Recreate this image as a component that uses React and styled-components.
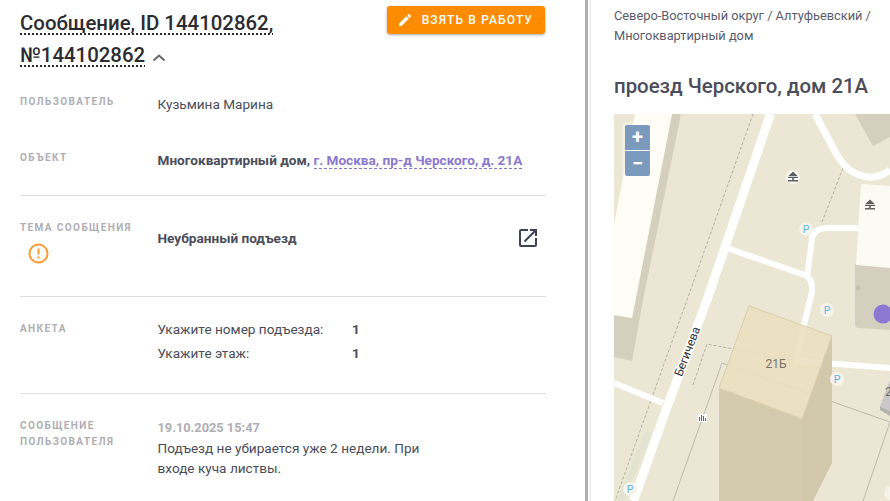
import React from 'react';
import styled, { createGlobalStyle } from 'styled-components';

const GlobalStyle = createGlobalStyle`
  html, body {
    margin: 0;
    padding: 0;
    height: 100%;
    overflow: hidden;
    background: #fff;
    font-family: Roboto, "Liberation Sans", sans-serif;
  }
`;

const Page = styled.div`
  display: flex;
  width: 890px;
  height: 501px;
  overflow: hidden;
`;

const Left = styled.section`
  box-sizing: border-box;
  width: 588px;
  flex: none;
  height: 501px;
  overflow: hidden;
  padding: 0 39px 0 20px;
  border-right: 3px solid #aeaeb4;
`;

const Head = styled.header`
  display: flex;
  justify-content: space-between;
  align-items: flex-start;
  padding-top: 6px;
  height: 74px;
  box-sizing: border-box;
`;

const Title = styled.h1`
  width: 340px;
  margin: 0;
  padding-top: 1px;
  font-size: 20.4px;
  line-height: 32px;
  font-weight: 500;
  color: #2c2c30;
`;

const Dotted = styled.span`
  text-decoration: underline dotted 2px #2c2c30;
  text-underline-offset: 3px;
`;

const Chevron = styled.svg`
  width: 14px;
  height: 9px;
  margin-left: 7px;
`;

const TakeButton = styled.button`
  display: flex;
  align-items: center;
  gap: 9px;
  height: 28px;
  margin-right: 1px;
  padding: 0 12px 0 10px;
  border: 0;
  border-radius: 3px;
  background: #ff8c00;
  color: #fff;
  font-family: inherit;
  font-size: 12px;
  font-weight: 500;
  letter-spacing: 1.12px;
  box-shadow: 0 1px 3px rgba(0, 0, 0, 0.35);
`;

const Row = styled.div`
  display: grid;
  grid-template-columns: 137.5px 1fr;
  align-content: start;
  height: ${(p) => p.$h}px;
  box-sizing: border-box;
  padding-top: ${(p) => p.$top}px;
  border-bottom: ${(p) => (p.$line ? '1px solid #dfdfe1' : '0')};
`;

const Label = styled.div`
  font-size: 10px;
  line-height: 16px;
  font-weight: 700;
  letter-spacing: 1.4px;
  color: #aeaeb4;
`;

const Value = styled.div`
  position: relative;
  margin-top: ${(p) => p.$shift || 0}px;
  font-size: 13.6px;
  line-height: 22px;
  color: #4a4d5a;
  font-weight: ${(p) => (p.$bold ? 700 : 400)};
`;

const Address = styled.span`
  color: #8a78cf;
  font-weight: 700;
  border-bottom: 1px dashed #8a78cf;
`;

const Warn = styled.svg`
  display: block;
  width: 21px;
  height: 21px;
  margin: 7px 0 0 8px;
`;

const OpenLink = styled.svg`
  position: absolute;
  top: -1px;
  right: 6px;
  width: 24px;
  height: 24px;
  fill: #3f4356;
`;

const Answers = styled.div`
  display: grid;
  grid-template-columns: 194.5px 1fr;
  margin-top: -4px;
  font-size: 13.6px;
  line-height: 24px;
  color: #4a4d5a;
`;

const AnswerValue = styled.b`
  font-weight: 700;
`;

const Stamp = styled.div`
  margin-top: 2px;
  font-size: 12.8px;
  line-height: 16px;
  font-weight: 700;
  color: #aeaeb4;
`;

const MessageText = styled.div`
  width: 270px;
  margin-top: 2px;
  font-size: 13.6px;
  line-height: 20px;
  color: #4a4d5a;
`;

const Right = styled.section`
  flex: 1;
  min-width: 0;
  display: flex;
  flex-direction: column;
  padding-left: 23px;
  margin-left: 2px;
  border-left: 1px solid #e4e4e6;
`;

const Crumbs = styled.div`
  padding-top: 6px;
  width: 270px;
  font-size: 12.8px;
  line-height: 20px;
  color: #5a5c6c;
`;

const Address2 = styled.h2`
  margin: 28px 0 0;
  font-size: 20.4px;
  line-height: 24px;
  font-weight: 500;
  color: #4a4d5a;
  white-space: nowrap;
`;

const MapBox = styled.div`
  position: relative;
  margin-top: 16px;
  flex: 1;
  overflow: hidden;
  background: #ebe7d4;
`;

const MapArt = styled.svg`
  display: block;
  width: 276px;
  height: 387px;
`;

const Zoom = styled.div`
  position: absolute;
  top: 11px;
  left: 11px;
  width: 25px;
  border-radius: 2px;
  overflow: hidden;
  background: #fff;
  box-shadow: 0 0 0 3px rgba(255, 255, 255, 0.35);
`;

const ZoomBtn = styled.div`
  height: 25px;
  display: flex;
  align-items: center;
  justify-content: center;
  background: #7b9abd;
  color: #fff;
  font-size: 20px;
  font-weight: 700;
  line-height: 25px;
  & + & {
    margin-top: 1px;
  }
`;

const Monument = ({ x, y, halo }) => (
  <g transform={`translate(${x} ${y})`}>
    {halo && <circle r="6.5" fill="#fff" />}
    <path d="M0,-5.5 L5,-0.8 H-5 Z M-5,0 H5 V0.9 H-5 Z M-0.8,1 H0.8 V3 H-0.8 Z M-5,3 H5 V4.5 H-5 Z" fill="#5e5e5e" />
  </g>
);

// map coordinates are page minus (614, 114)
const Map = () => (
  <MapArt viewBox="0 0 276 387">
    <rect width="276" height="387" fill="#ebe7d4" />
    {/* long building, top left */}
    <polygon points="58,0 67,0 29,186 18,247 0,243 0,201 18,204" fill="#d5cfbe" />
    <polygon points="21,0 58,0 18,204 0,201 0,111" fill="#fdfcf5" />
    {/* top right block */}
    <polygon points="241,0 276,0 276,23 259,32" fill="#d5cfbe" />
    {/* grey-beige block with the marker */}
    <path d="M241,150 L276,153 V216 L245,214 Q241,214 241,210 Z" fill="#d5cfc0" />
    <circle cx="244" cy="174" r="2.5" fill="#c6c1b2" />
    <polygon points="247,70 276,72 276,154 242,151" fill="#fcfbf3" />
    <circle cx="269" cy="200" r="9.5" fill="#8d79d2" />
    {/* light green strip */}
    <polygon points="31,317 38,319 10,387 3,387" fill="#e3e3d1" />
    {/* dashed paths */}
    <g fill="none" stroke="#b5b1a0" strokeWidth="1" strokeDasharray="3 2">
      <path d="M139,0 L73,186 L36,289 L1,387" />
      <path d="M229,54 L208,108" />
      <path d="M79,271 L93,230 L178,246" />
    </g>
    {/* thin outlines */}
    <g fill="none" stroke="#bdbab0" strokeWidth="1">
      <path d="M108,249 L59,387" />
      <path d="M108,249 L276,308" />
      <path d="M276,308 L249,387" />
    </g>
    {/* roads */}
    <g fill="none" stroke="#fff" strokeLinejoin="round">
      <path d="M156.5,0 L93,186 L54.5,289 L19.5,387" strokeWidth="9" />
      <path d="M113,134 L191,161 Q199,165 198,178 L189,215 L182,247 L276,254" strokeWidth="6" />
      <path d="M193,163 L198,125 Q199,115 212,114 L244,114" strokeWidth="6" />
      <path d="M201,0 L223,41 Q231,54 239,58 Q250,64 259,63 Q268,62 276,56" strokeWidth="7" />
      <path d="M0,269 L49,289" strokeWidth="6" />
    </g>
    {/* 21B tower */}
    <polygon points="105,274 188,305 188,387 105,387" fill="#d4cbae" />
    <polygon points="188,305 218,222 218,349 199,387 188,387" fill="#d2c9ad" />
    <polygon
      points="135,192 218,222 188,305 105,274"
      fill="#ecdfc1"
      fillOpacity="0.9"
      stroke="#dacea9"
      strokeWidth="1"
      strokeLinejoin="round"
    />
    <text x="162" y="254" fontFamily="Roboto, sans-serif" fontSize="12" fill="#77736a" textAnchor="middle">21Б</text>
    {/* street name */}
    <text
      transform="translate(77,239) rotate(-69)"
      fontFamily="Roboto, sans-serif"
      fontSize="12"
      fill="#333"
      stroke="#fff"
      strokeWidth="2.5"
      paintOrder="stroke"
      textAnchor="middle"
    >
      Бегичева
    </text>
    {/* grey building, right edge */}
    <polygon points="266,292 276,297 276,302 266,296" fill="#b4b3b2" />
    <polygon points="276,266 266,292 276,297" fill="#c9c8c7" />
    <text x="271" y="282" fontFamily="Roboto, sans-serif" fontSize="12" fill="#6e6c66">2</text>
    {/* parking marks */}
    {[[192, 115], [213, 196], [223, 265], [16, 375]].map(([x, y]) => (
      <g key={x}>
        <circle cx={x} cy={y} r="7" fill="#f5f3ea" />
        <text x={x} y={y + 4} fontFamily="Roboto, sans-serif" fontSize="10.5" fill="#62b1e8" textAnchor="middle">P</text>
      </g>
    ))}
    <circle cx="277" cy="379" r="7" fill="#f5f3ea" />
    <Monument x={179} y={63} halo />
    <Monument x={256} y={91} />
    {/* tree row icon */}
    <rect x="84" y="300" width="9" height="8" fill="#fff" />
    <path d="M85.5,307 V303 M87.5,307 V301 M89.5,307 V302 M91.5,307 V304" stroke="#666" strokeWidth="1" />
  </MapArt>
);

export default function App() {
  return (
    <Page>
      <GlobalStyle />
      <Left>
        <Head>
          <Title>
            <Dotted>Сообщение, ID 144102862,</Dotted>{' '}
            <Dotted>№144102862</Dotted>
            <Chevron viewBox="0 0 14 9">
              <path d="M1.5 7.5 L7 2.5 L12.5 7.5" fill="none" stroke="#66666c" strokeWidth="2" />
            </Chevron>
          </Title>
          <TakeButton>
            <svg width="16" height="16" viewBox="0 0 24 24" fill="#fff">
              <path d="M3 17.25V21h3.75L17.81 9.94l-3.75-3.75L3 17.25zM20.71 7.04a1 1 0 0 0 0-1.41l-2.34-2.34a1 1 0 0 0-1.41 0l-1.83 1.83 3.75 3.75 1.83-1.83z" />
            </svg>
            ВЗЯТЬ В РАБОТУ
          </TakeButton>
        </Head>
        <Row $h={56} $top={20}>
          <Label>ПОЛЬЗОВАТЕЛЬ</Label>
          <Value $shift={-1}>Кузьмина Марина</Value>
        </Row>
        <Row $h={66} $top={20} $line>
          <Label>ОБЪЕКТ</Label>
          <Value $bold $shift={-1}>
            Многоквартирный дом, <Address>г. Москва, пр-д Черского, д. 21А</Address>
          </Value>
        </Row>
        <Row $h={101} $top={24} $line>
          <div>
            <Label>ТЕМА СООБЩЕНИЯ</Label>
            <Warn viewBox="0 0 21 21">
              <circle cx="10.5" cy="10.5" r="9" fill="none" stroke="#ff9a33" strokeWidth="2" />
              <path d="M10.5 5.5 V11.5 M10.5 13.5 V15.5" stroke="#ff9a33" strokeWidth="2" />
            </Warn>
          </div>
          <Value $bold $shift={7}>
            Неубранный подъезд
            <OpenLink viewBox="0 0 24 24">
              <path d="M19 19H5V5h7V3H5a2 2 0 0 0-2 2v14c0 1.1.9 2 2 2h14c1.1 0 2-.9 2-2v-7h-2v7zM14 3v2h3.59l-9.83 9.83 1.41 1.41L19 6.41V10h2V3h-7z" />
            </OpenLink>
          </Value>
        </Row>
        <Row $h={97} $top={24} $line>
          <Label>АНКЕТА</Label>
          <Answers>
            <span>Укажите номер подъезда:</span>
            <AnswerValue>1</AnswerValue>
            <span>Укажите этаж:</span>
            <AnswerValue>1</AnswerValue>
          </Answers>
        </Row>
        <Row $h={110} $top={24}>
          <Label>СООБЩЕНИЕ<br />ПОЛЬЗОВАТЕЛЯ</Label>
          <div>
            <Stamp>19.10.2025 15:47</Stamp>
            <MessageText>Подъезд не убирается уже 2 недели. При входе куча листвы.</MessageText>
          </div>
        </Row>
      </Left>
      <Right>
        <Crumbs>Северо-Восточный округ / Алтуфьевский / Многоквартирный дом</Crumbs>
        <Address2>проезд Черского, дом 21А</Address2>
        <MapBox>
          <Map />
          <Zoom>
            <ZoomBtn>+</ZoomBtn>
            <ZoomBtn>−</ZoomBtn>
          </Zoom>
        </MapBox>
      </Right>
    </Page>
  );
}
